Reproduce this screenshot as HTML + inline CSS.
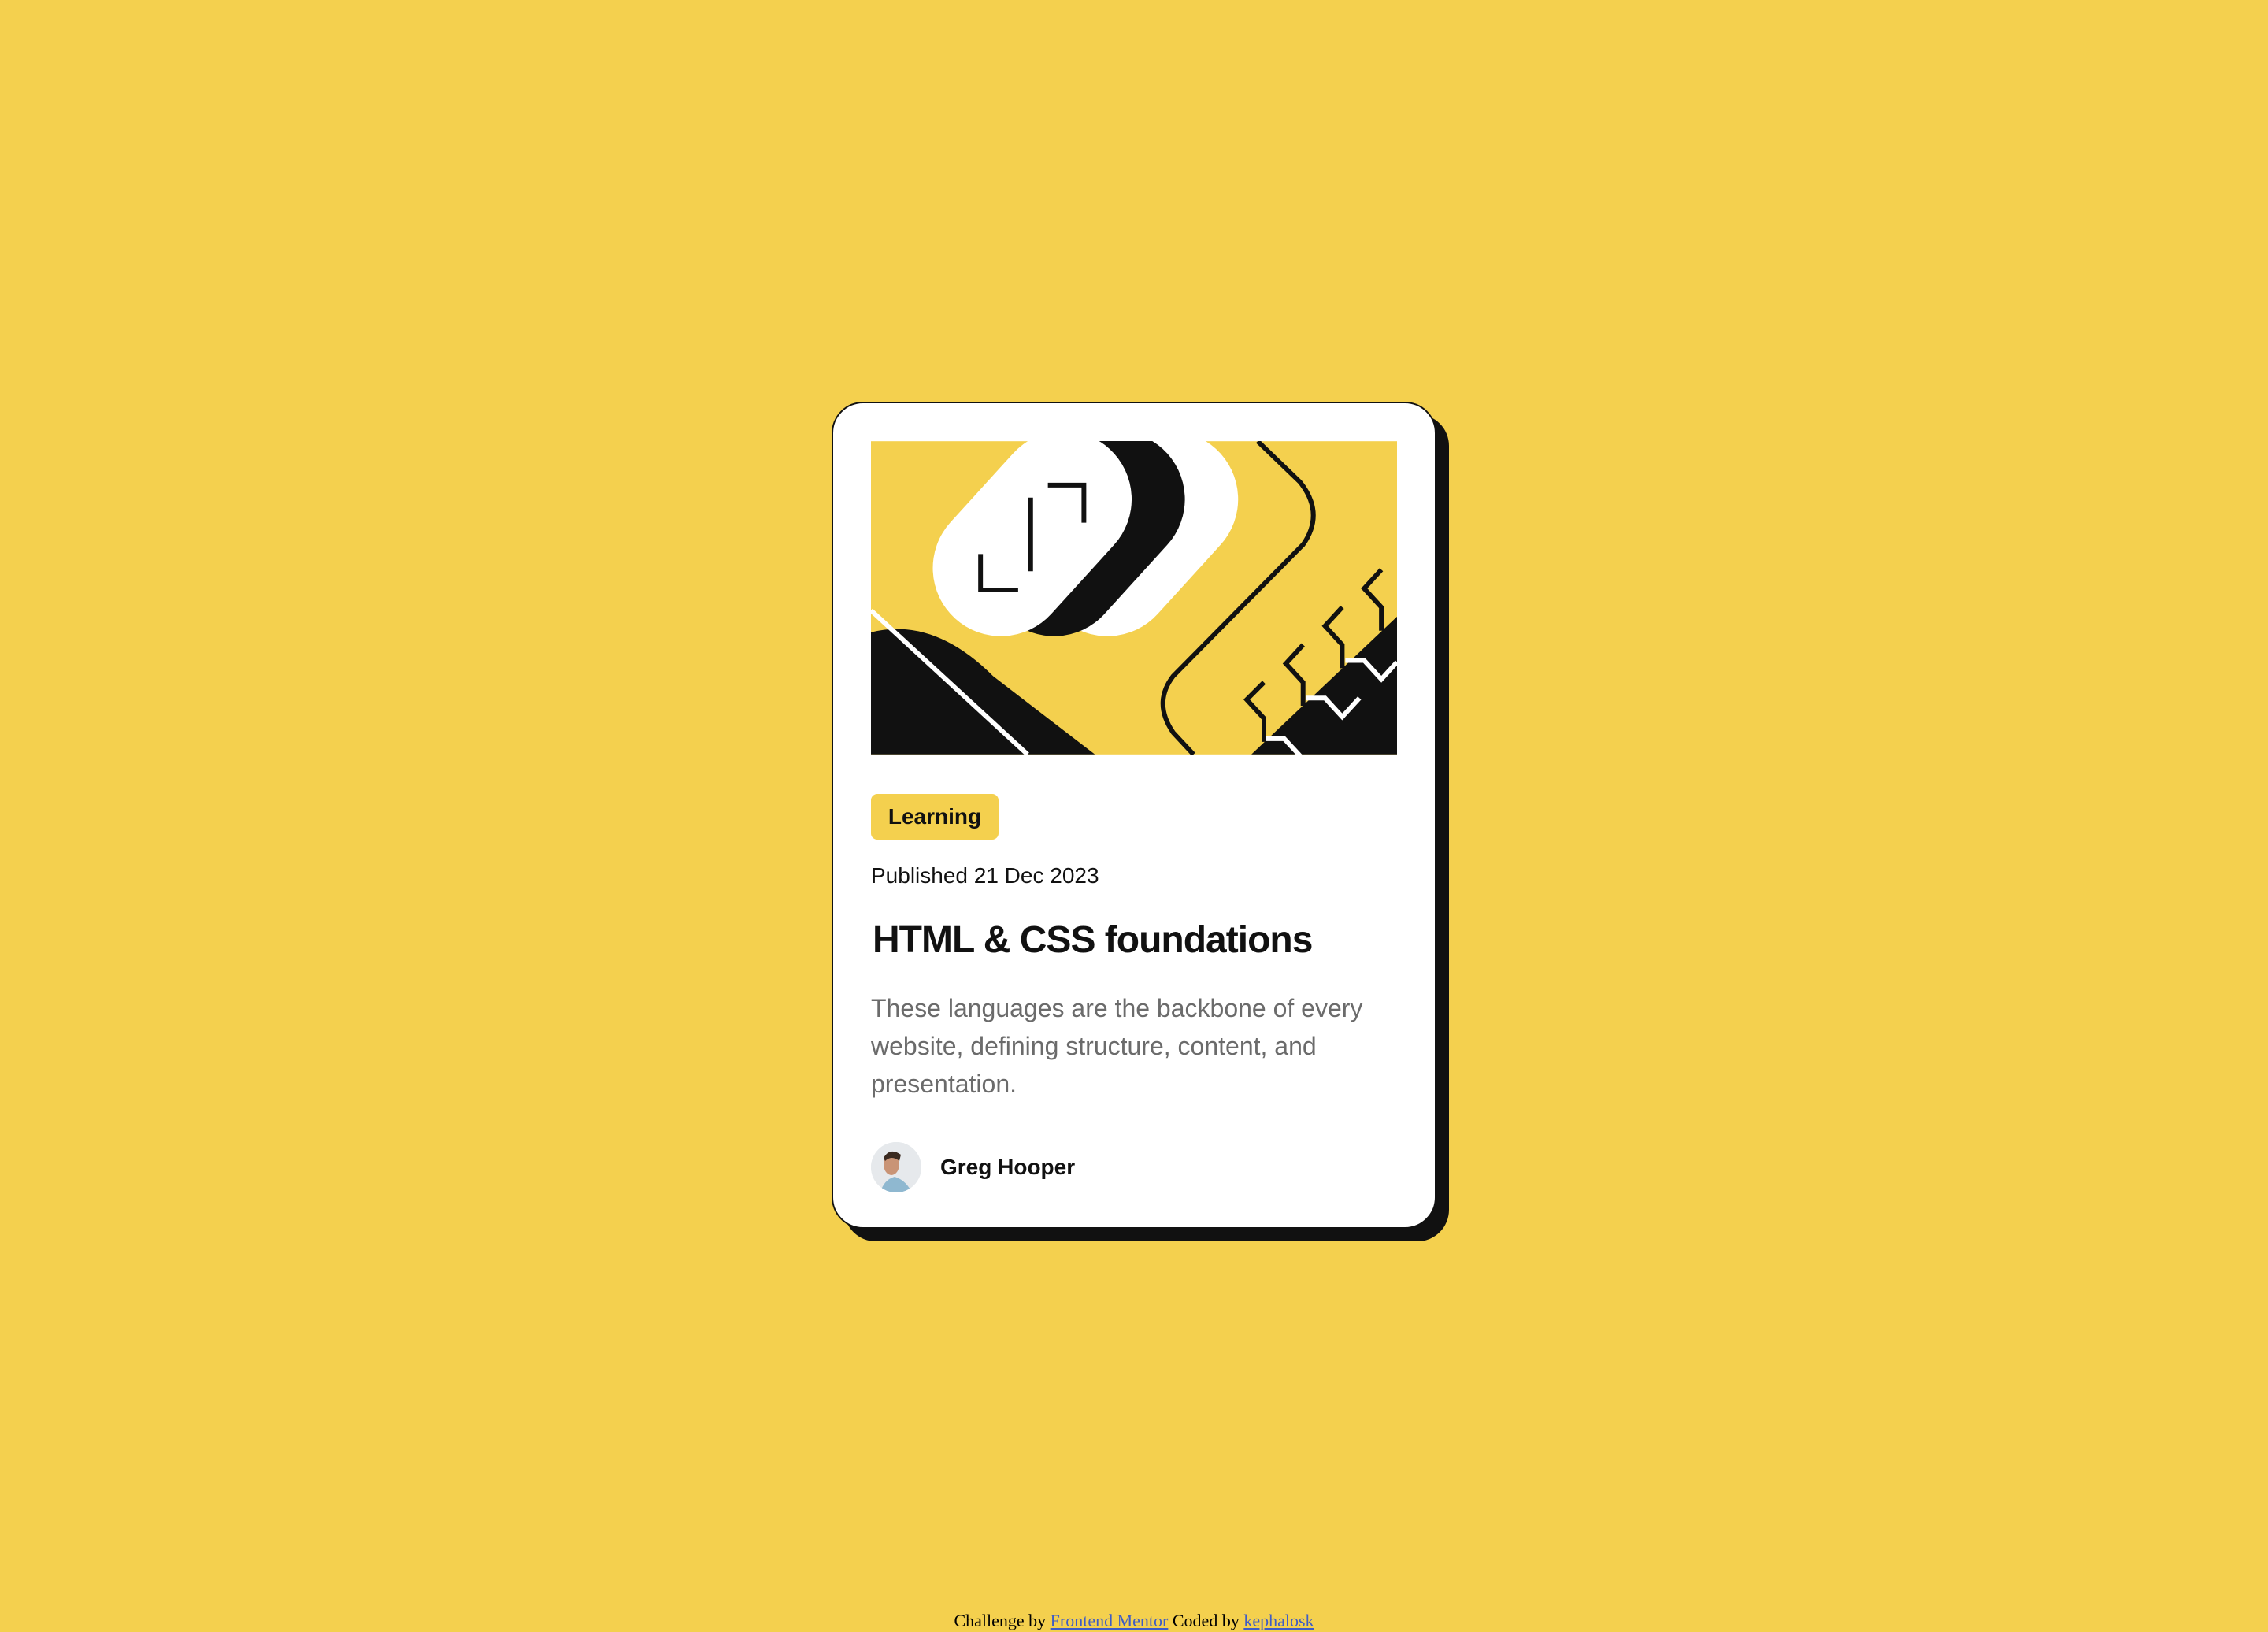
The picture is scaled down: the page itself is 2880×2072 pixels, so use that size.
<!DOCTYPE html>
<html><head><meta charset="utf-8"><style>
html{zoom:2}
*{margin:0;padding:0;box-sizing:border-box}
body{width:1440px;height:1036px;background:#f4d04e;position:relative;overflow:hidden;font-family:"Liberation Sans",sans-serif}
.card{position:absolute;left:528px;top:255px;width:384px;height:525px;background:#fff;border:1px solid #111;border-radius:20px;box-shadow:8px 8px 0 #111}
.img{position:absolute;left:24px;top:24px;width:334px;height:199px;overflow:hidden}
.tag{position:absolute;left:24px;top:248px;width:81px;height:29px;background:#f4d04e;border-radius:4px;font-weight:bold;font-size:14px;line-height:29px;text-align:center;color:#111}
.pub{position:absolute;left:24px;top:291px;font-size:14px;line-height:18px;color:#111}
h1{position:absolute;left:25px;top:325px;font-size:24px;line-height:32px;font-weight:bold;color:#111;letter-spacing:-0.5px}
p{position:absolute;left:24px;top:372px;width:340px;font-size:16px;line-height:24px;color:#6b6b6b}
.av{position:absolute;left:24px;top:469px;width:32px;height:32px;border-radius:50%;overflow:hidden;background:#e8ecef}
.name{position:absolute;left:68px;top:476px;font-size:14px;line-height:18px;font-weight:bold;color:#111}
.foot{position:absolute;left:0;width:1440px;top:1022px;text-align:center;font-family:"Liberation Serif",serif;font-size:11px;line-height:14px;color:#000}
.foot a{color:#3e5cc5;text-decoration:underline}
</style></head><body>
<div class="card">
<div class="img"><svg width="334" height="199" viewBox="0 0 336 200">
<rect width="336" height="200" fill="#f4d04e"/>
<line x1="83" y1="81" x2="123" y2="37" stroke="#fff" stroke-width="87" stroke-linecap="round" transform="translate(68,0)"/>
<line x1="83" y1="81" x2="123" y2="37" stroke="#111" stroke-width="87" stroke-linecap="round" transform="translate(34,0)"/>
<line x1="83" y1="81" x2="123" y2="37" stroke="#fff" stroke-width="87" stroke-linecap="round"/>
<path d="M70 72 V95 H94 M102 83 V36 M113 28 H136 V52" fill="none" stroke="#111" stroke-width="3"/>
<path d="M0 122 Q40 112 78 150 L143 200 L0 200 Z" fill="#111"/>
<path d="M0 108 L100 200" stroke="#fff" stroke-width="3"/>
<path d="M247 0 L274 26 Q290 46 276 66 L193 150 Q180 167 193 186 L206 200" fill="none" stroke="#111" stroke-width="3"/>
<path d="M336 112 L243 200 L336 200 Z" fill="#111"/>
<path d="M251 154 L240 165 L251 177 V192 M276 130 L265 142 L276 154 V169 M301 106 L290 118 L301 130 V145 M326 82 L315 94 L326 106 V121" fill="none" stroke="#111" stroke-width="3"/>
<path d="M252 190 H264 L276 203 M278 164 H290 L301 176 L312 164 M303 140 H315 L326 152 L336 141" fill="none" stroke="#fff" stroke-width="3"/>
</svg></div>
<div class="tag">Learning</div>
<div class="pub">Published 21 Dec 2023</div>
<h1>HTML &amp; CSS foundations</h1>
<p>These languages are the backbone of every website, defining structure, content, and presentation.</p>
<div class="av"><svg width="32" height="32"><rect width="32" height="32" fill="#e6e9ec"/><path d="M6 32 Q8 24 15 22 Q22 24 26 32 Z" fill="#8fb8d0"/><ellipse cx="13" cy="14" rx="5" ry="7" fill="#c99476"/><path d="M8 10 Q12 3 19 8 L18 12 Q13 8 9 12 Z" fill="#3a2a20"/></svg></div>
<div class="name">Greg Hooper</div>
</div>
<div class="foot">Challenge by <a>Frontend Mentor</a> Coded by <a>kephalosk</a></div>
</body></html>
